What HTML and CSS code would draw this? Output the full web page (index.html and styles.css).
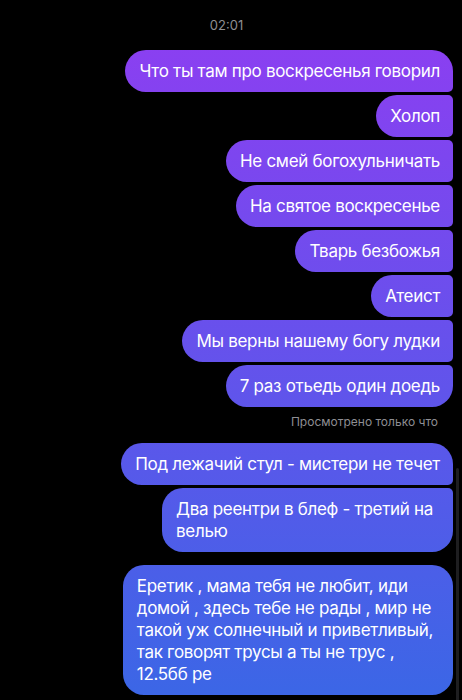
FILE: index.html
```html
<!DOCTYPE html>
<html lang="ru">
<head>
  <meta charset="UTF-8">
  <meta name="viewport" content="width=device-width, initial-scale=1.0">
  <title>Чат</title>
  <link rel="stylesheet" href="styles.css">
</head>
<body>
<div class="chat">
  <div class="time">02:01</div>

  <div class="group">
    <div class="bubble">Что ты там про воскресенья говорил</div>
    <div class="bubble">Холоп</div>
    <div class="bubble">Не смей богохульничать</div>
    <div class="bubble">На святое воскресенье</div>
    <div class="bubble">Тварь безбожья</div>
    <div class="bubble">Атеист</div>
    <div class="bubble">Мы верны нашему богу лудки</div>
    <div class="bubble">7 раз отьедь один доедь</div>
  </div>

  <div class="seen">Просмотрено только что</div>

  <div class="group">
    <div class="bubble">Под лежачий стул - мистери не течет</div>
    <div class="bubble multi">Два реентри в блеф - третий на<br>велью</div>
  </div>

  <div class="group">
    <div class="bubble multi">Еретик , мама тебя не любит, иди<br>домой , здесь тебе не рады , мир не<br>такой уж солнечный и приветливый,<br>так говорят трусы а ты не трус ,<br>12.5бб ре</div>
  </div>
</div>
<div class="scrollbar"></div>
</body>
</html>
```

FILE: styles.css
```css
/* Page */
body {
  margin: 0;
  background-color: #000;
  font-family: Inter, "Liberation Sans", sans-serif;
  color: #fff;
  overflow: hidden;
}

/* Chat column */
.chat {
  display: flex;
  flex-direction: column;
  padding: 0 9px 0 0;
}

.time {
  padding-top: 17px;
  margin-bottom: 17px;
  text-align: center;
  font-size: 13px;
  line-height: 16px;
  color: #8e8e93;
}

/* Message groups */
.group {
  display: flex;
  flex-direction: column;
  align-items: flex-end;
  gap: 3px;
}

.group + .group {
  margin-top: 13px;
}

/* Bubbles */
.bubble {
  padding: 10px 13px 10px 14px;
  border-radius: 21px;
  font-size: 17px;
  line-height: 22px;
  letter-spacing: -0.3px;
  white-space: nowrap;
  background: linear-gradient(180deg, #8b3ff1 40px, #3c66e6 690px) fixed;
}

.bubble.multi {
  padding-right: 20px;
}

.group .bubble:not(:first-child) {
  border-top-right-radius: 5px;
}

.group .bubble:not(:last-child) {
  border-bottom-right-radius: 5px;
}

/* Seen label */
.seen {
  margin: 8px 0 14px;
  padding-right: 15px;
  text-align: right;
  font-size: 12px;
  line-height: 14px;
  color: #8e8e93;
}

/* Scroll indicator */
.scrollbar {
  position: absolute;
  top: 468px;
  right: 3px;
  width: 3px;
  height: 240px;
  border-radius: 2px;
  background-color: #1e1e20;
}
```
